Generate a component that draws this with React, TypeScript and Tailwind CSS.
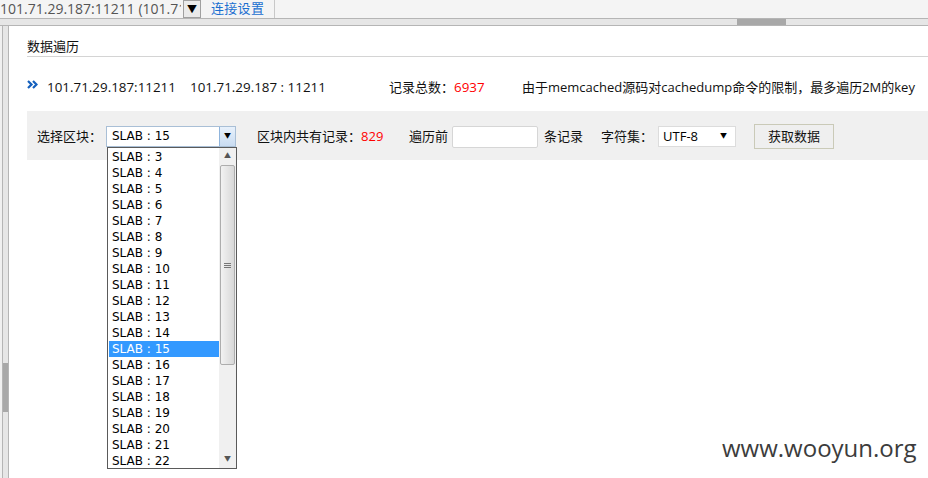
const slabs = Array.from({ length: 20 }, (_, i) => i + 3);

function ChevronIcon() {
  return (
    <svg width="11" height="9" viewBox="0 0 11 9" className="mt-[-6px]">
      <path d="M1 1 L4.5 4.5 L1 8" stroke="#1560bd" strokeWidth="2.2" fill="none" />
      <path d="M6 1 L9.5 4.5 L6 8" stroke="#1560bd" strokeWidth="2.2" fill="none" />
    </svg>
  );
}

function SlabList() {
  return (
    <div className="absolute left-0 top-[20px] z-10 flex h-[322px] w-[130px] border border-[#5a5a5a] bg-white">
      <ul className="flex-1 pt-[1px] pl-[1px] font-['DejaVu_Sans',sans-serif] text-[12px] text-black">
        {slabs.map((n) => (
          <li
            key={n}
            className={
              n === 15
                ? "h-[16px] bg-[#3399ff] pl-[3px] leading-[16px] text-white"
                : "h-[16px] pl-[3px] leading-[16px]"
            }
          >
            SLAB : {n}
          </li>
        ))}
      </ul>
      <div className="flex w-[17px] flex-col bg-[#f0f0f0]">
        <div className="flex h-[17px] items-center justify-center text-[7px] text-[#555]">▲</div>
        <div className="mx-[1px] flex h-[200px] items-center justify-center rounded-[2px] border border-[#adadad] bg-gradient-to-r from-[#f2f2f2] to-[#d8d8d8]">
          <div className="flex flex-col gap-[1px]">
            <div className="h-px w-[7px] bg-[#777]" />
            <div className="h-px w-[7px] bg-[#777]" />
            <div className="h-px w-[7px] bg-[#777]" />
          </div>
        </div>
        <div className="flex-1" />
        <div className="flex h-[17px] items-center justify-center text-[7px] text-[#555]">▼</div>
      </div>
    </div>
  );
}

export default function App() {
  return (
    <div className="relative h-[478px] w-[928px] overflow-hidden bg-white font-['Open_Sans','Noto_Sans_CJK_SC',sans-serif] text-[13px] text-[#222]">
      {/* top connection bar */}
      <div className="flex h-[18px] items-center bg-[#f4f4f4]">
        <div className="w-[181px] overflow-hidden whitespace-nowrap text-[14px] leading-[18px] text-[#555]">
          101.71.29.187:11211 (101.71.29
        </div>
        <div className="ml-[2px] flex h-[18px] w-[18px] items-center justify-center border border-[#a0a0a0] bg-[#eaeaea] text-[10px] text-black">
          ▼
        </div>
        <span className="ml-[10px] text-[13px] tracking-[0.3px] text-[#1a6fd0]">连接设置</span>
        <div className="ml-[10px] h-[18px] w-px bg-[#c8c8c8]" />
      </div>

      {/* horizontal scrollbar */}
      <div className="flex h-[8px] border-y border-[#b5b5b5] bg-[#e6e6e6]">
        <div className="ml-[737px] h-full w-[49px] bg-[#a8a8a8]" />
      </div>

      <div className="flex h-[452px]">
        {/* vertical scrollbar */}
        <div className="flex w-[9px]">
          <div className="w-[2px] bg-[#f0f0f0]" />
          <div className="flex w-[7px] flex-col border-x border-[#b5b5b5] bg-[#e6e6e6]">
            <div className="mt-[337px] h-[49px] bg-[#a8a8a8]" />
          </div>
        </div>

        <div className="flex-1 pl-[18px]">
          <div className="h-[31px] border-b border-[#d4d4d4] pt-[10px] leading-[20px] text-[#111]">数据遍历</div>

          <div className="mt-[20px] flex h-[20px] items-center leading-[20px] text-[#111]">
            <div className="w-[20px]">
              <ChevronIcon />
            </div>
            <span className="w-[143px] text-[13.4px]">101.71.29.187:11211</span>
            <span className="w-[199px] text-[13.4px]">101.71.29.187 : 11211</span>
            <span className="w-[133px]">
              记录总数：<span className="text-[13.4px] text-[#ff0000]">6937</span>
            </span>
            <span className="whitespace-nowrap">由于memcached源码对cachedump命令的限制，最多遍历2M的key</span>
          </div>

          <div className="mt-[14px] h-[49px] bg-[#f0f0f0] pt-[13px] pl-[10px]">
            <div className="flex h-[25px] items-center text-[#111]">
              <span className="w-[69px]">选择区块：</span>
              <div className="relative flex h-[21px] w-[130px] border border-[#a9bfd6] bg-white">
                <span className="flex-1 pl-[5px] font-['DejaVu_Sans',sans-serif] text-[12px] leading-[19px] text-black">SLAB : 15</span>
                <div className="flex w-[16px] items-center justify-center border-l border-[#8fb4dc] bg-gradient-to-b from-[#e8f1fb] to-[#c9dcf2] text-[7px] text-black">
                  ▼
                </div>
                <SlabList />
              </div>
              <span className="ml-[21px]">区块内共有记录：</span>
              <span className="w-[48px] text-[#ff0000]">829</span>
              <span>遍历前</span>
              <div className="ml-[4px] h-[22px] w-[86px] rounded-[2px] border border-[#d6d6d6] bg-white" />
              <span className="ml-[6px] w-[57px]">条记录</span>
              <span className="w-[57px]">字符集：</span>
              <div className="flex h-[21px] w-[78px] items-center justify-between border border-[#dcdcdc] bg-white pr-[8px] pl-[4px]">
                <span className="text-[13px] text-black">UTF-8</span>
                <span className="text-[7px] text-black">▼</span>
              </div>
              <button className="ml-[18px] h-[25px] w-[80px] border border-[#cacab8] bg-[#efefef] text-[13px] text-[#111]">
                获取数据
              </button>
            </div>
          </div>
        </div>
      </div>

      <div className="absolute top-[432px] left-[722px] text-[24px] leading-[32px] text-[#3c3c3c]">www.wooyun.org</div>
    </div>
  );
}
